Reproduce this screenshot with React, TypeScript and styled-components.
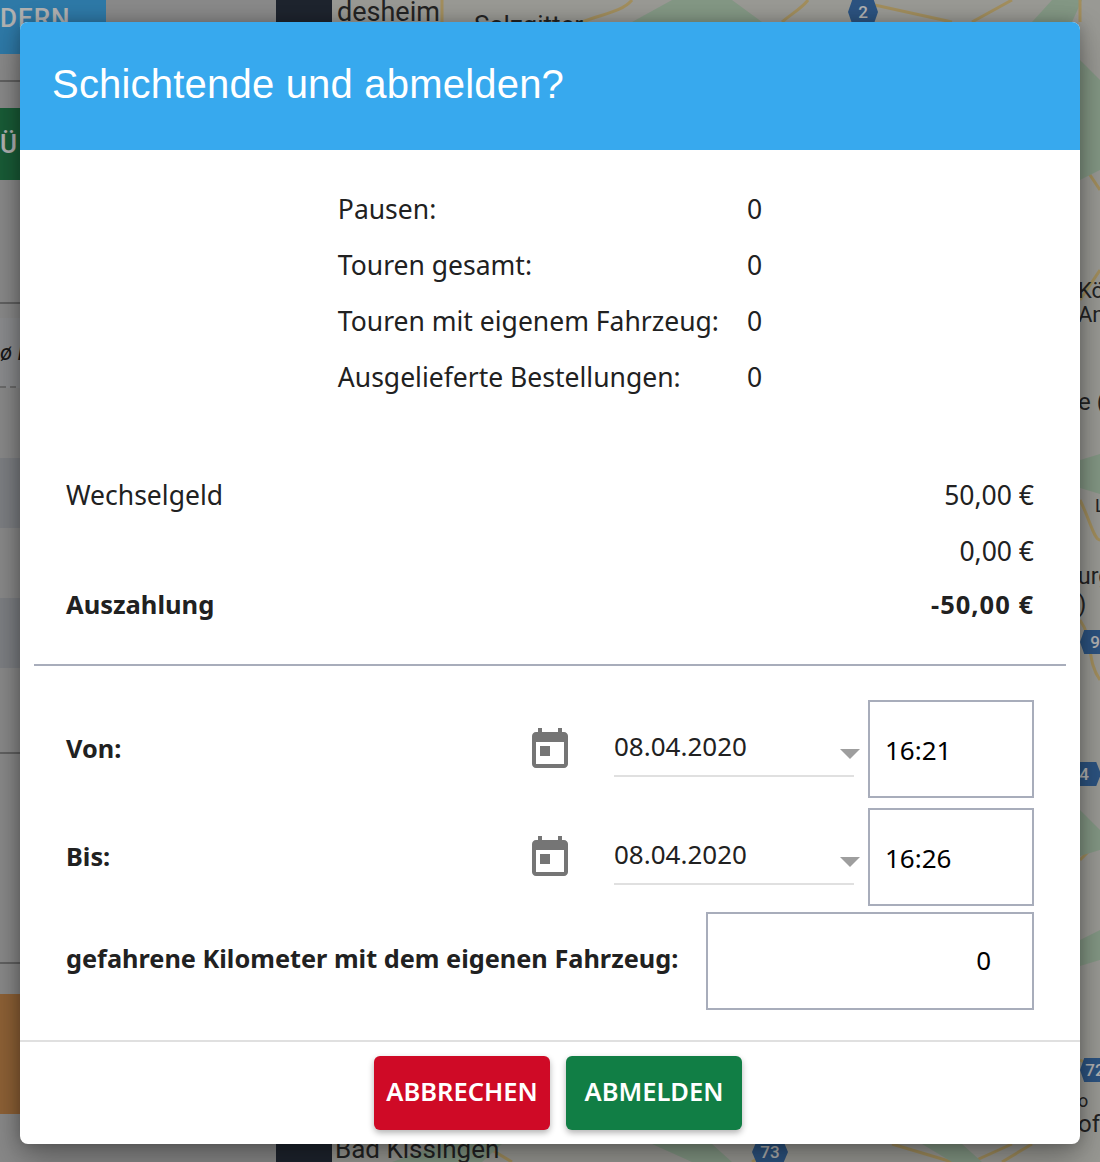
import React from "react";
import styled, { createGlobalStyle } from "styled-components";

const Global = createGlobalStyle`
  html, body { margin: 0; padding: 0; height: 100%; background: #c4c4c4; overflow: hidden; }
  * { box-sizing: border-box; }
`;

const Page = styled.div`
  position: relative;
  width: 1100px;
  height: 1162px;
  overflow: hidden;
  display: flex;
  font-family: "Noto Sans", "Open Sans", sans-serif;
`;

const Sidebar = styled.aside`
  width: 276px;
  flex: none;
  background: #c4c4c4;
  display: flex;
  flex-direction: column;
`;

const SideButton = styled.div<{ $bg: string; $h: number; $mt: number; $pb: number }>`
  width: 106px;
  height: ${(p) => p.$h}px;
  margin-top: ${(p) => p.$mt}px;
  padding-bottom: ${(p) => p.$pb}px;
  background: ${(p) => p.$bg};
  color: #fff;
  font-size: 26px;
  font-family: "Roboto", sans-serif;
  font-weight: 500;
  display: flex;
  align-items: center;
  flex: none;
  overflow: hidden;
  letter-spacing: 1px;
`;

const SideRule = styled.div<{ $mt: number }>`
  height: 2px;
  background: #8c8c8c;
  margin-top: ${(p) => p.$mt}px;
  flex: none;
`;

const SideBlock = styled.div<{ $h: number; $mt: number; $bg: string; $dashed?: boolean }>`
  height: ${(p) => p.$h}px;
  margin-top: ${(p) => p.$mt}px;
  background: ${(p) => p.$bg};
  border-bottom: ${(p) => (p.$dashed ? "2px dashed #9a9a9a" : "0")};
  flex: none;
  display: flex;
  align-items: center;
  padding-left: 0;
  font-family: "Roboto", sans-serif;
  font-style: italic;
  font-size: 22px;
  color: #222;
`;

const DarkColumn = styled.div`
  width: 56px;
  flex: none;
  background: #2b3443;
`;

const MapArea = styled.div`
  position: relative;
  flex: 1;
  background: #dcdbd4;
`;

const MapDrawing = styled.svg`
  position: absolute;
  inset: 0;
  width: 100%;
  height: 100%;
`;

const MapLabel = styled.span<{ $x: number; $y: number; $size: number }>`
  position: absolute;
  left: ${(p) => p.$x}px;
  top: ${(p) => p.$y}px;
  font-size: ${(p) => p.$size}px;
  line-height: 1;
  font-family: "Roboto", sans-serif;
  color: #333;
  white-space: nowrap;
`;

const RoadBadge = styled.span<{ $x: number; $y: number; $w: number }>`
  position: absolute;
  left: ${(p) => p.$x}px;
  top: ${(p) => p.$y}px;
  width: ${(p) => p.$w}px;
  height: 24px;
  background: #3f78b8;
  clip-path: polygon(14% 0, 86% 0, 100% 50%, 86% 100%, 14% 100%, 0 50%);
  color: #fff;
  font-family: "Roboto", sans-serif;
  font-size: 17px;
  font-weight: 500;
  line-height: 24px;
  text-align: center;
`;

const Overlay = styled.div`
  position: absolute;
  inset: 0;
  background: rgba(0, 0, 0, 0.3);
`;

const Modal = styled.section`
  position: absolute;
  left: 20px;
  top: 22px;
  width: 1060px;
  height: 1122px;
  background: #fff;
  border-radius: 8px;
  overflow: hidden;
  display: flex;
  flex-direction: column;
  color: #212121;
  box-shadow: 0 16px 36px rgba(0, 0, 0, 0.3), 0 0 16px rgba(0, 0, 0, 0.25);
`;

const Header = styled.h2`
  margin: 0;
  height: 128px;
  flex: none;
  background: #37a9ee;
  color: #fff;
  display: flex;
  align-items: center;
  padding: 0 0 4px 32px;
  font-family: "Liberation Sans", Arial, sans-serif;
  font-size: 40px;
  letter-spacing: 0.2px;
  font-weight: 400;
`;

const Stats = styled.div`
  margin-top: 31px;
  display: grid;
  grid-template-columns: auto auto;
  grid-auto-rows: 56px;
  column-gap: 28px;
  justify-content: center;
  align-items: center;
  font-size: 26.5px;
`;

const Cell = styled.div`
  white-space: nowrap;
`;

const Summary = styled.div`
  margin-top: 62px;
  padding: 0 46px;
  display: flex;
  flex-direction: column;
`;

const SummaryRow = styled.div<{ $bold?: boolean; $h: number }>`
  height: ${(p) => p.$h}px;
  display: flex;
  align-items: center;
  justify-content: space-between;
  font-size: ${(p) => (p.$bold ? 25.5 : 26.5)}px;
  font-weight: ${(p) => (p.$bold ? 700 : 400)};
  padding-bottom: ${(p) => (p.$bold ? 4 : 0)}px;
`;

const BoldAmount = styled.span`
  letter-spacing: 1px;
`;

const Rule = styled.hr`
  margin: 31px 14px 0;
  border: 0;
  height: 2px;
  background: #a8adbb;
  flex: none;
`;

const Form = styled.div`
  margin-top: 34px;
  padding: 0 46px;
  display: flex;
  flex-direction: column;
`;

const FormRow = styled.div<{ $mt: number }>`
  height: 98px;
  margin-top: ${(p) => p.$mt}px;
  display: flex;
  align-items: center;
`;

const FieldLabel = styled.label<{ $lift: number }>`
  flex: 1;
  font-size: 25.3px;
  font-weight: 700;
  white-space: nowrap;
  padding-bottom: ${(p) => p.$lift}px;
`;

const CalendarIcon = styled.svg`
  width: 48px;
  height: 48px;
  flex: none;
  fill: #757575;
  margin: 2px 40px 0 0;
`;

const DateField = styled.div`
  position: relative;
  align-self: flex-start;
  width: 240px;
  height: 77px;
  flex: none;
  margin: 0 14px 0 0;
  border-bottom: 2px solid #e0e0e0;
  padding-top: 31px;
  line-height: 30px;
  font-size: 26px;
`;

const Arrow = styled.span`
  position: absolute;
  right: -6px;
  top: 49px;
  width: 0;
  height: 0;
  border-left: 10px solid transparent;
  border-right: 10px solid transparent;
  border-top: 10px solid #9e9e9e;
`;

const Box = styled.div<{ $w: number; $right?: boolean }>`
  width: ${(p) => p.$w}px;
  height: 98px;
  flex: none;
  border: 2px solid #a8adbb;
  background: #fff;
  display: flex;
  align-items: center;
  justify-content: ${(p) => (p.$right ? "flex-end" : "flex-start")};
  padding: ${(p) => (p.$right ? "0 41px 2px 0" : "2px 0 0 15px")};
  font-size: 26px;
  color: #000;
`;

const Footer = styled.footer`
  margin-top: auto;
  border-top: 2px solid #e0e0e0;
  padding: 14px;
  display: flex;
  justify-content: center;
`;

const Action = styled.button<{ $bg: string }>`
  width: 176px;
  height: 74px;
  margin-left: 16px;
  padding: 0 0 4px;
  border: 0;
  border-radius: 6px;
  background: ${(p) => p.$bg};
  color: #fff;
  font-family: inherit;
  font-size: 25.5px;
  font-weight: 600;
  box-shadow: 0 3px 6px rgba(0, 0, 0, 0.3);
`;

const stats = [
  ["Pausen:", "0"],
  ["Touren gesamt:", "0"],
  ["Touren mit eigenem Fahrzeug:", "0"],
  ["Ausgelieferte Bestellungen:", "0"],
];

const Today = () => (
  <CalendarIcon viewBox="0 0 24 24">
    <path d="M19 3h-1V1h-2v2H8V1H6v2H5c-1.11 0-1.99.9-1.99 2L3 19c0 1.1.89 2 2 2h14c1.1 0 2-.9 2-2V5c0-1.1-.9-2-2-2zm0 16H5V8h14v11zM7 10h5v5H7z" />
  </CalendarIcon>
);

const DateTimeRow = ({ label, time, mt }: { label: string; time: string; mt: number }) => (
  <FormRow $mt={mt}>
    <FieldLabel $lift={2}>{label}</FieldLabel>
    <Today />
    <DateField>
      08.04.2020
      <Arrow />
    </DateField>
    <Box $w={166}>{time}</Box>
  </FormRow>
);

export default function App() {
  return (
    <Page>
      <Global />
      <Sidebar>
        <SideButton $bg="#43aef0" $h={54} $mt={0} $pb={18}>DERN</SideButton>
        <SideRule $mt={26} />
        <SideButton $bg="#25844f" $h={72} $mt={26} $pb={0}>Ü</SideButton>
        <SideRule $mt={122} />
        <SideBlock $h={70} $mt={14} $bg="#c8c9cc" $dashed>ø M</SideBlock>
        <SideBlock $h={70} $mt={70} $bg="#b4b6bc" />
        <SideBlock $h={70} $mt={70} $bg="#b4b6bc" />
        <SideRule $mt={84} />
        <SideRule $mt={208} />
        <SideBlock $h={120} $mt={30} $bg="#cc8c4e" />
      </Sidebar>
      <DarkColumn />
      <MapArea>
        <MapDrawing viewBox="0 0 768 1162" preserveAspectRatio="none" fill="none">
          <path d="M300 22l40-22h60l30 22zM700 22l20-22h30l-10 22z" fill="#bcd8be" />
          <path d="M110 22V0M250 22c20-8 40-10 50-22M450 22c12-10 20-14 26-22M520 0l100 22M640 22l40-22M748 22V0" stroke="#e8cc86" strokeWidth="3" />
          <path d="M748 300l20-30M748 160l20 30M748 500c10 20 14 40 20 40M748 620c14 20 6 40 20 60M748 860l20-20M748 1060l20 10" stroke="#e8cc86" strokeWidth="3" />
          <path d="M748 60l20 20v90l-20 10zM748 460l20-6v40l-20-6zM748 810l20 20v20l-20 6zM748 940l20-10v30l-20 6z" fill="#bcd8be" />
          <path d="M420 1162l30-18M560 1144l60 18M640 1162l40-18M150 1144l30 18M700 1144l-30 18" stroke="#e8cc86" strokeWidth="3" />
          <path d="M60 1162l50-18h60l-20 18zM320 1144l40 18h40l-20-18zM590 1144l30 18h30l-20-18z" fill="#bcd8be" />
        </MapDrawing>
        <MapLabel $x={5} $y={-1} $size={27}>desheim</MapLabel>
        <MapLabel $x={142} $y={12} $size={26}>Salzgitter</MapLabel>
        <MapLabel $x={3} $y={1136} $size={26}>Bad Kissingen</MapLabel>
        <MapLabel $x={746} $y={280} $size={22}>Kö</MapLabel>
        <MapLabel $x={746} $y={304} $size={22}>An</MapLabel>
        <MapLabel $x={746} $y={390} $size={24}>e (</MapLabel>
        <MapLabel $x={763} $y={497} $size={18}>L</MapLabel>
        <MapLabel $x={746} $y={565} $size={23}>urg</MapLabel>
        <MapLabel $x={746} $y={592} $size={24}>)</MapLabel>
        <MapLabel $x={746} $y={1092} $size={18}>o</MapLabel>
        <MapLabel $x={746} $y={1112} $size={24}>of</MapLabel>
        <RoadBadge $x={516} $y={0} $w={30}>2</RoadBadge>
        <RoadBadge $x={748} $y={630} $w={30}>9</RoadBadge>
        <RoadBadge $x={735} $y={762} $w={34}>4</RoadBadge>
        <RoadBadge $x={748} $y={1058} $w={30}>72</RoadBadge>
        <RoadBadge $x={420} $y={1140} $w={36}>73</RoadBadge>
      </MapArea>
      <Overlay />
      <Modal>
        <Header>Schichtende und abmelden?</Header>
        <Stats>
          {stats.map(([label, value]) => (
            <React.Fragment key={label}>
              <Cell>{label}</Cell>
              <Cell>{value}</Cell>
            </React.Fragment>
          ))}
        </Stats>
        <Summary>
          <SummaryRow $h={56}><span>Wechselgeld</span><span>50,00 €</span></SummaryRow>
          <SummaryRow $h={56}><span /><span>0,00 €</span></SummaryRow>
          <SummaryRow $h={54} $bold><span>Auszahlung</span><BoldAmount>-50,00 €</BoldAmount></SummaryRow>
        </Summary>
        <Rule />
        <Form>
          <DateTimeRow label="Von:" time="16:21" mt={0} />
          <DateTimeRow label="Bis:" time="16:26" mt={10} />
          <FormRow $mt={6}>
            <FieldLabel $lift={6}>gefahrene Kilometer mit dem eigenen Fahrzeug:</FieldLabel>
            <Box $w={328} $right>0</Box>
          </FormRow>
        </Form>
        <Footer>
          <Action $bg="#cf0a26">ABBRECHEN</Action>
          <Action $bg="#117e45">ABMELDEN</Action>
        </Footer>
      </Modal>
    </Page>
  );
}
